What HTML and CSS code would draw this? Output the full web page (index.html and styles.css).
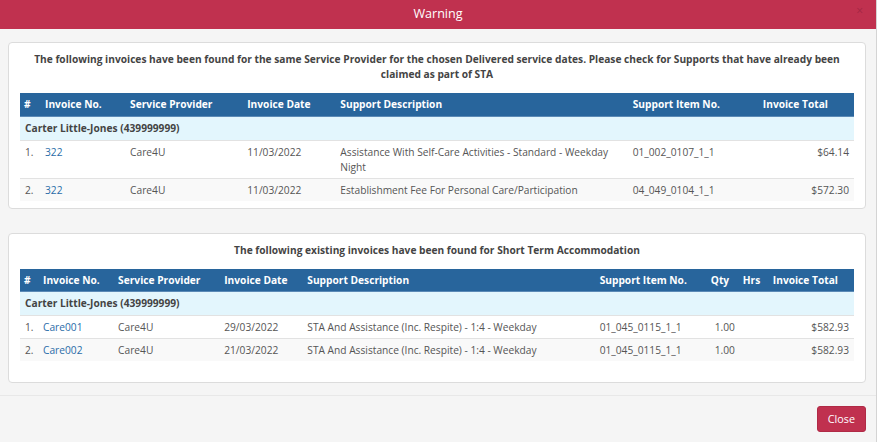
FILE: index.html
```html
<!DOCTYPE html>
<html lang="en">
	<head>
		<meta charset="utf-8">
		<meta name="viewport" content="width=device-width, initial-scale=1">
		<link rel="stylesheet" href="styles.css">
	</head>

	<body>
		<div class='modal'>
		  <div class='modal-header'>
		    <span class='modal-title'>Warning</span>
		    <span class='modal-close'>×</span>
		  </div>

		  <div class='modal-body'>
		    <div class='panel panel-first'>
		      <p class='panel-title'>The following invoices have been found for the same Service Provider for the chosen Delivered service dates. Please check for Supports that have already been claimed as part of STA</p>
		      <table class='grid grid-one'>
		        <thead>
		          <tr>
		            <th class='c-num'>#</th>
		            <th class='c-inv'>Invoice No.</th>
		            <th class='c-prov'>Service Provider</th>
		            <th class='c-date'>Invoice Date</th>
		            <th class='c-desc'>Support Description</th>
		            <th class='c-item'>Support Item No.</th>
		            <th class='c-total'>Invoice Total</th>
		          </tr>
		        </thead>
		        <tbody>
		          <tr class='group'><td colspan='7'>Carter Little-Jones (439999999)</td></tr>
		          <tr>
		            <td>1.</td>
		            <td><a href='#'>322</a></td>
		            <td>Care4U</td>
		            <td>11/03/2022</td>
		            <td>Assistance With Self-Care Activities - Standard - Weekday Night</td>
		            <td>01_002_0107_1_1</td>
		            <td class='money'>$64.14</td>
		          </tr>
		          <tr class='alt'>
		            <td>2.</td>
		            <td><a href='#'>322</a></td>
		            <td>Care4U</td>
		            <td>11/03/2022</td>
		            <td>Establishment Fee For Personal Care/Participation</td>
		            <td>04_049_0104_1_1</td>
		            <td class='money'>$572.30</td>
		          </tr>
		        </tbody>
		      </table>
		    </div>

		    <div class='panel panel-second'>
		      <p class='panel-title'>The following existing invoices have been found for Short Term Accommodation</p>
		      <table class='grid grid-two'>
		        <thead>
		          <tr>
		            <th class='c-num'>#</th>
		            <th class='c-inv'>Invoice No.</th>
		            <th class='c-prov'>Service Provider</th>
		            <th class='c-date'>Invoice Date</th>
		            <th class='c-desc'>Support Description</th>
		            <th class='c-item'>Support Item No.</th>
		            <th class='c-qty'>Qty</th>
		            <th class='c-hrs'>Hrs</th>
		            <th class='c-total'>Invoice Total</th>
		          </tr>
		        </thead>
		        <tbody>
		          <tr class='group'><td colspan='9'>Carter Little-Jones (439999999)</td></tr>
		          <tr>
		            <td>1.</td>
		            <td><a href='#'>Care001</a></td>
		            <td>Care4U</td>
		            <td>29/03/2022</td>
		            <td>STA And Assistance (Inc. Respite) - 1:4 - Weekday</td>
		            <td>01_045_0115_1_1</td>
		            <td class='qty'>1.00</td>
		            <td></td>
		            <td class='money'>$582.93</td>
		          </tr>
		          <tr class='alt'>
		            <td>2.</td>
		            <td><a href='#'>Care002</a></td>
		            <td>Care4U</td>
		            <td>21/03/2022</td>
		            <td>STA And Assistance (Inc. Respite) - 1:4 - Weekday</td>
		            <td>01_045_0115_1_1</td>
		            <td class='qty'>1.00</td>
		            <td></td>
		            <td class='money'>$582.93</td>
		          </tr>
		        </tbody>
		      </table>
		    </div>
		  </div>

		  <div class='modal-footer'>
		    <span class='btn-close'>Close</span>
		  </div>
		</div>
	</body>
</html>
```

FILE: styles.css
```css
html {
	background-color: #fff;
}

body {
	margin: 0;
	font: 10.2px "Open Sans", "Liberation Sans", sans-serif;
	color: #555;
}

.modal {
	width: 876px;
	height: 442px;
	border-right: 1px solid #d4d4d4;
	background-color: #f5f5f5;
	display: flex;
	flex-direction: column;
}

.modal-header {
	position: relative;
	height: 29px;
	background-color: #c0314f;
	display: flex;
	align-items: center;
	justify-content: center;
}

.modal-title {
	color: #fff;
	font-size: 12.6px;
	line-height: 1;
}

.modal-close {
	position: absolute;
	top: 5px;
	right: 13px;
	color: #a42744;
	font-size: 12px;
	line-height: 1;
}

.modal-body {
	padding: 13px 10px 12px 8px;
	display: flex;
	flex-direction: column;
	gap: 24px;
	border-bottom: 1px solid #e8e8e8;
}

.panel {
	background-color: #fff;
	border: 1px solid #dcdcdc;
	border-radius: 4px;
	padding: 9px 11px 7px;
}

.panel-second {
	padding-bottom: 21px;
}

.panel-title {
	margin: 0 0 11px;
	text-align: center;
	font-weight: bold;
	color: #444;
	line-height: 15px;
	padding: 0 10px;
}

.grid {
	width: 100%;
	border-collapse: collapse;
	table-layout: fixed;
}

.grid th,
.grid td {
	box-sizing: border-box;
}

.grid th {
	background-color: #28659c;
	color: #fff;
	font-weight: bold;
	text-align: left;
	height: 23px;
	padding: 0 5px;
	border-bottom: 1px solid #5b8ab6;
}

.grid td {
	padding: 4px 5px 3px;
	line-height: 15px;
	vertical-align: top;
	color: #555;
	border-top: 1px solid #e2e2e2;
}

.grid tr.group td {
	background-color: #e3f6fd;
	font-weight: bold;
	color: #444;
	border-top: 0;
	padding-bottom: 4px;
}

.grid tr.alt td {
	background-color: #f9f9f9;
}

.grid a {
	color: #2a6ca8;
	text-decoration: none;
}

.money {
	text-align: right;
}

.qty {
	text-align: right;
	padding-right: 3px !important;
}

.grid-one .c-num { width: 20px; }
.grid-one .c-inv { width: 85px; }
.grid-one .c-prov { width: 117px; }
.grid-one .c-date { width: 93px; }
.grid-one .c-desc { width: 292px; }
.grid-one .c-item { width: 130px; }
.grid-one .c-total { width: 96px; }

.grid-two .c-num { width: 18px; }
.grid-two .c-inv { width: 75px; }
.grid-two .c-prov { width: 106px; }
.grid-two .c-date { width: 83px; }
.grid-two .c-desc { width: 292px; }
.grid-two .c-item { width: 111px; }
.grid-two .c-qty { width: 32px; }
.grid-two .c-hrs { width: 30px; }
.grid-two .c-total { width: 86px; }

.grid th.c-num {
	padding: 0 0 0 4px;
}

.modal-footer {
	flex: 1;
	display: flex;
	justify-content: flex-end;
	align-items: center;
	padding: 0 10px;
}

.btn-close {
	display: block;
	background-color: #c0314f;
	color: #fff;
	font-size: 10.8px;
	line-height: 24px;
	height: 26px;
	padding: 0 10px;
	border-radius: 3px;
	border: 1px solid #b02a46;
	box-sizing: border-box;
	cursor: pointer;
}
```
